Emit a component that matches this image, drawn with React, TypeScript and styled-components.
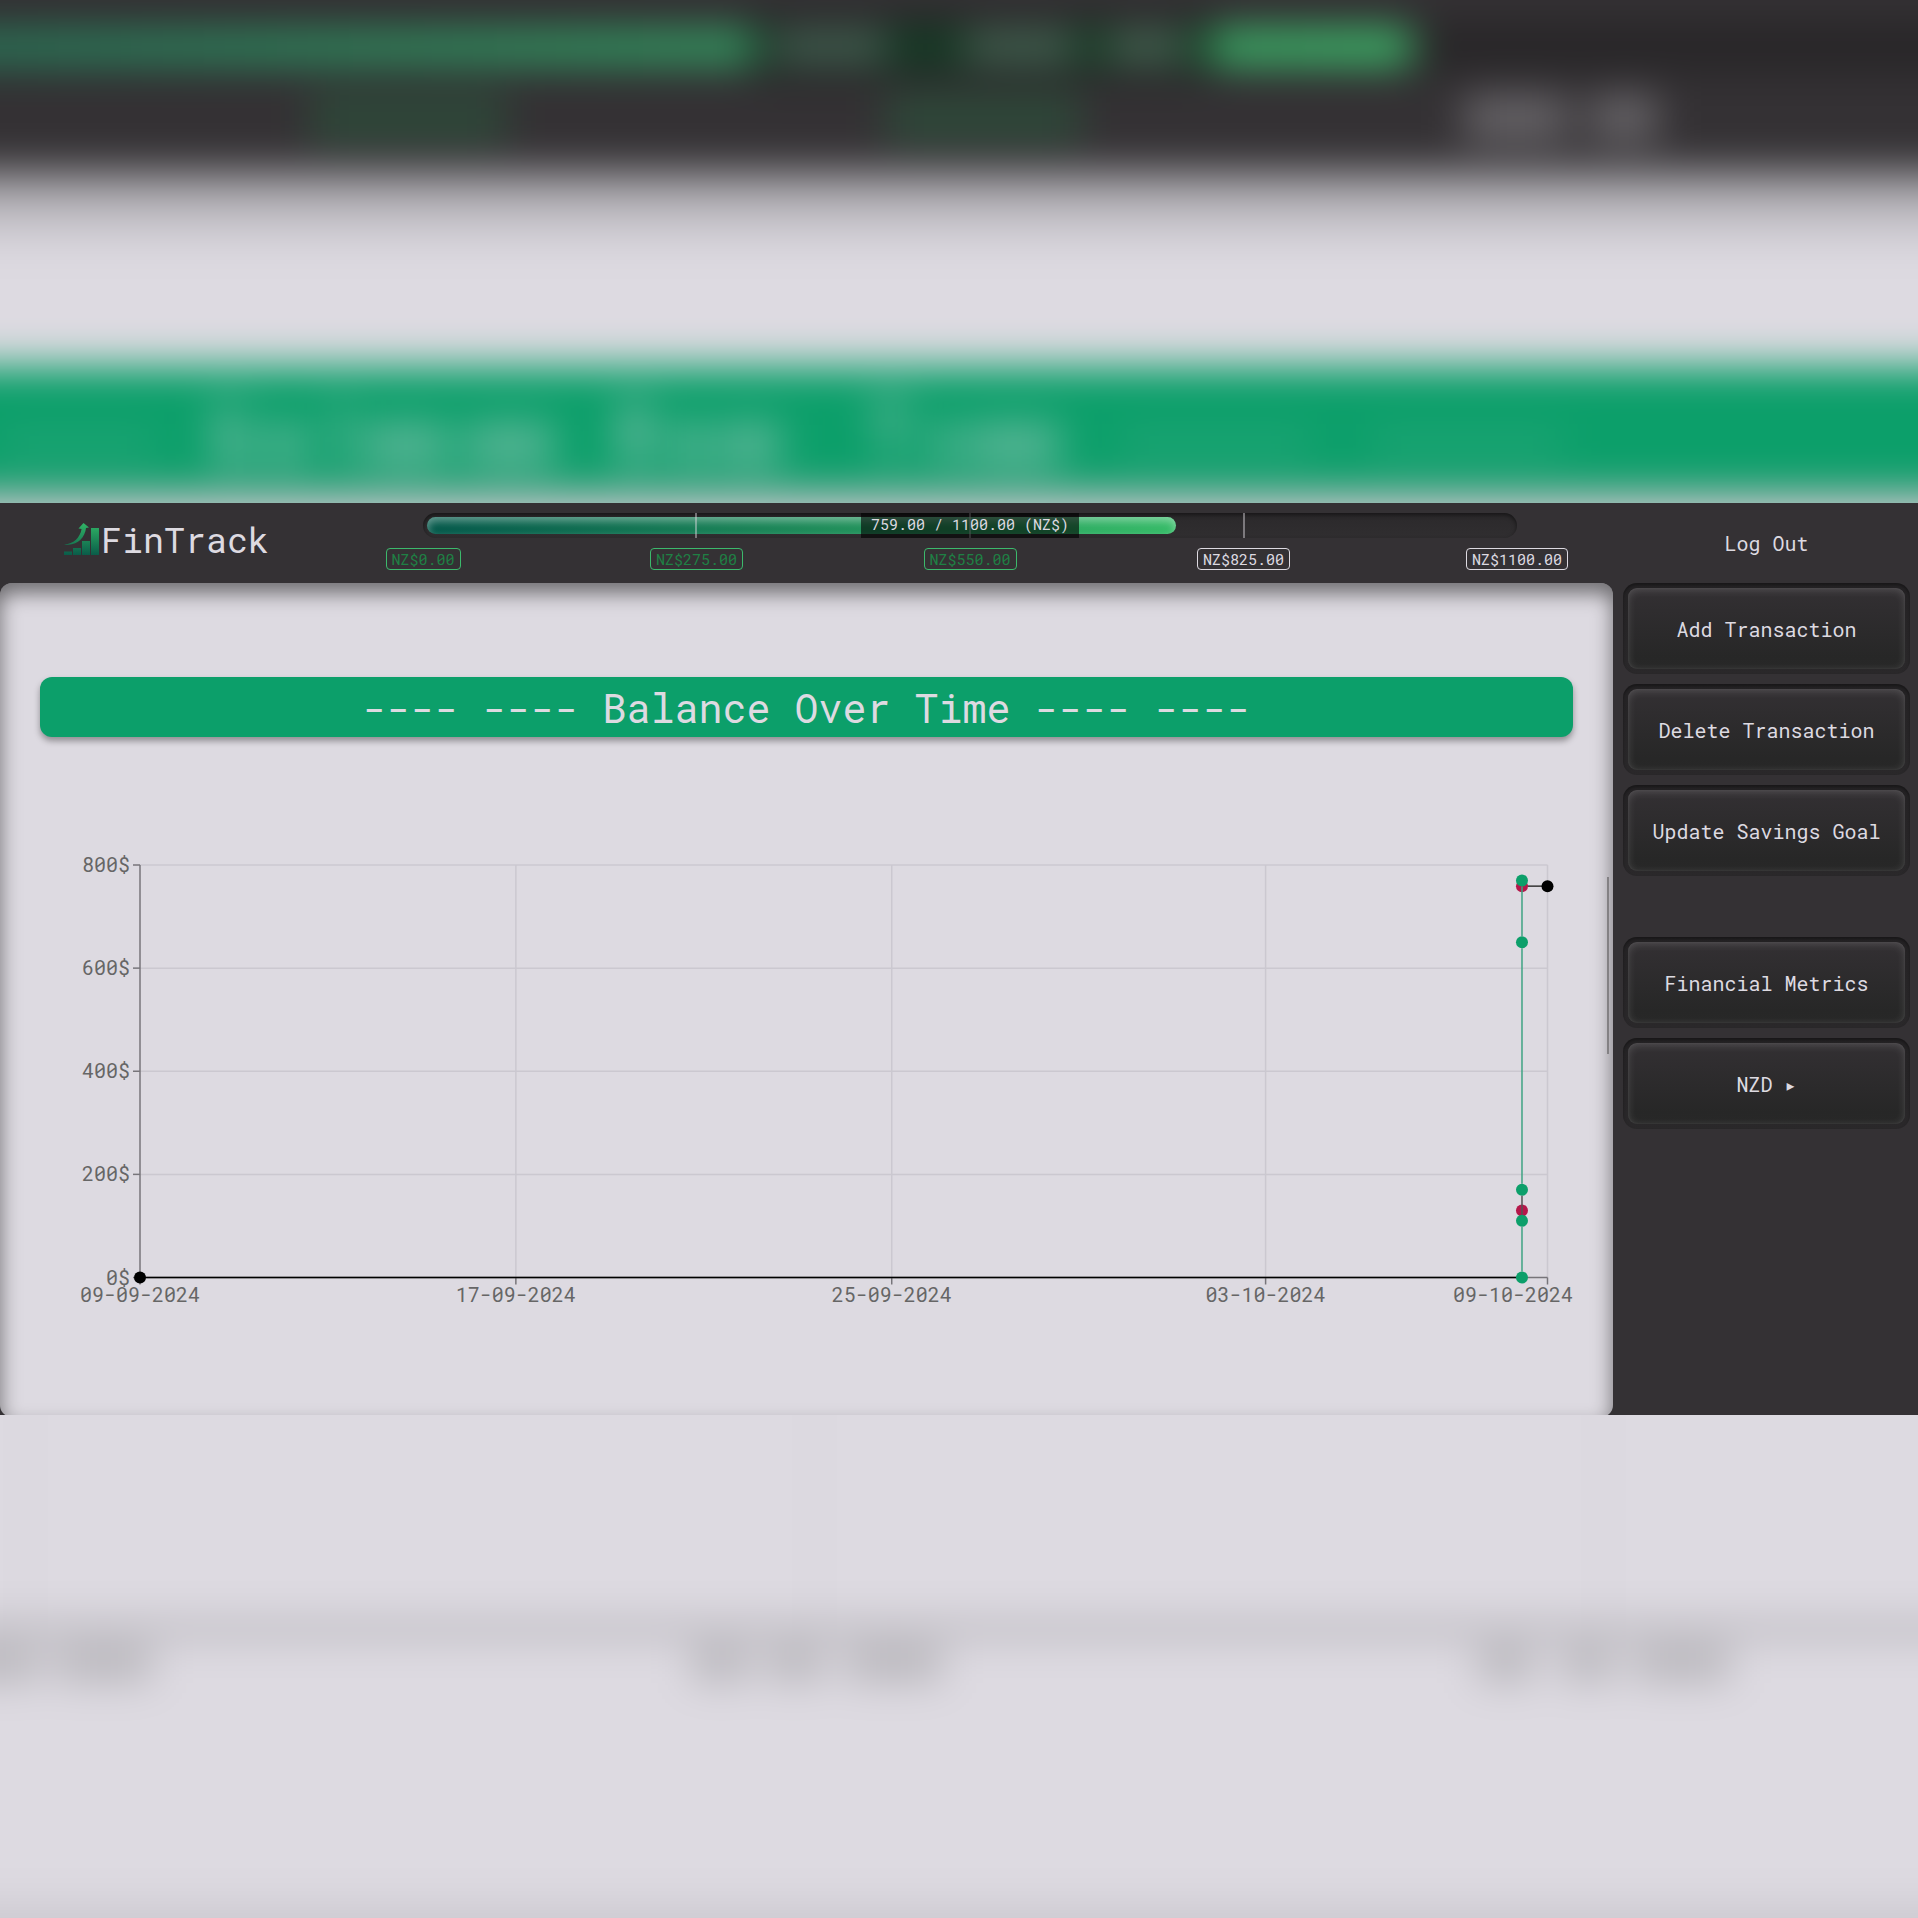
import React from "react";
import styled, { createGlobalStyle, css } from "styled-components";

const color = {
  ink: "#343134",
  paper: "#dddae1",
  brand: "#0c9f6a",
  brandText: "#1f8044",
  brandBorder: "#3cb96c",
  expense: "#b5174a",
  axis: "#666666",
};

const GlobalStyle = createGlobalStyle`
  *, *::before, *::after { box-sizing: border-box; }
  body {
    margin: 0;
    background: ${color.paper};
    color: ${color.paper};
    font-family: "Roboto Mono", "DejaVu Sans Mono", "Liberation Mono", monospace;
    font-size: 20px;
  }
  button { font: inherit; color: inherit; cursor: pointer; }
`;

const Page = styled.div`
  position: relative;
  min-height: 100vh;
  display: flex;
  flex-direction: column;
  justify-content: center;
  overflow: hidden;
`;

const BackdropArt = styled.svg`
  position: absolute;
  inset: 0;
  width: 100%;
  height: 100%;
`;

const Window = styled.div`
  position: relative;
  display: grid;
  grid-template-columns: minmax(0, 1fr) 305px;
  background: ${color.ink};
  overflow: hidden;
`;

const Main = styled.main`
  display: flex;
  flex-direction: column;
`;

const Header = styled.header`
  display: flex;
  height: 80px;
  padding: 0 96px 0 64px;
`;

const Brand = styled.a`
  display: flex;
  align-items: center;
  flex: 0 0 359px;
  gap: 2px;
  height: 72px;
  color: inherit;
  text-decoration: none;
  font-size: 35px;
  line-height: 40px;
`;

const Goal = styled.section`
  flex: 1;
  padding-top: 10px;
`;

const Track = styled.div`
  position: relative;
  height: 25px;
  padding: 4px;
  border-radius: 13px;
  background: linear-gradient(#2b292b, #302e30);
  box-shadow: inset 0 2px 4px rgba(0, 0, 0, 0.5);
`;

const Fill = styled.div`
  height: 17px;
  border-radius: 9px;
  background: linear-gradient(90deg, #04584a, #35bb67);
  box-shadow: inset 0 4px 8px rgba(255, 255, 255, 0.4);
`;

const Marks = styled.div`
  position: absolute;
  inset: 0;
  display: flex;
  justify-content: space-evenly;
`;

const Mark = styled.span`
  width: 2px;
  background: rgba(221, 218, 225, 0.45);
`;

const TrackCaption = styled.div`
  position: absolute;
  inset: 0;
  display: flex;
  justify-content: center;
`;

const CaptionText = styled.span`
  padding: 0 10px;
  background: rgba(0, 0, 0, 0.6);
  font-size: 15px;
  line-height: 23px;
  white-space: nowrap;
`;

const Scale = styled.div`
  display: flex;
  justify-content: space-between;
  padding-top: 10px;
`;

const ScaleStop = styled.div`
  display: flex;
  justify-content: center;
  width: 0;
`;

const ScaleLabel = styled.span<{ $reached: boolean }>`
  flex: none;
  padding: 0 5px;
  border: 1px solid ${(p) => (p.$reached ? color.brandBorder : color.paper)};
  border-radius: 4px;
  color: ${(p) => (p.$reached ? color.brandText : color.paper)};
  font-size: 15px;
  line-height: 20px;
`;

const Panel = styled.section`
  position: relative;
  flex: 1;
  margin-bottom: -2px;
  padding: 94px 40px 100px;
  border-radius: 12px;
  background: ${color.paper};
  box-shadow: inset 0 10px 20px rgba(0, 0, 0, 0.5);
`;

const Banner = styled.h1`
  height: 60px;
  margin: 0 0 100px;
  border-radius: 12px;
  background: ${color.brand};
  box-shadow: 0 4px 6px rgba(0, 0, 0, 0.35);
  font-size: 40px;
  font-weight: 400;
  line-height: 62px;
  text-align: center;
  white-space: pre;
`;

const ChartArt = styled.svg`
  display: block;
  width: 100%;
  height: auto;
  overflow: visible;
`;

const ScrollThumb = styled.span`
  position: absolute;
  top: 294px;
  right: 4px;
  width: 2px;
  height: 177px;
  background: #838184;
`;

const Sidebar = styled.aside`
  display: flex;
  flex-direction: column;
  padding: 0 8px 0 10px;
`;

const LogOut = styled.button`
  height: 80px;
  padding: 0;
  border: 0;
  background: none;
`;

const ButtonStack = styled.nav<{ $apart?: boolean }>`
  display: grid;
  gap: 10px;
  ${(p) =>
    p.$apart &&
    css`
      margin-top: 61px;
    `}
`;

const ButtonWell = styled.div`
  display: grid;
  height: 91px;
  padding: 5px;
  border-radius: 14px;
  background: linear-gradient(#242224, #2a282a);
  box-shadow: inset 0 2px 3px rgba(0, 0, 0, 0.35);
`;

const MenuButton = styled.button`
  padding: 0;
  border: 0;
  border-radius: 9px;
  background: linear-gradient(#333033, #272727 85%, #282828);
  box-shadow:
    inset 0 2px 8px rgba(255, 255, 255, 0.16),
    inset 0 0 3px rgba(255, 255, 255, 0.06);
`;

function Backdrop() {
  return (
    <BackdropArt viewBox="0 0 1918 1918" preserveAspectRatio="xMidYMid slice" aria-hidden="true">
      <defs>
        <filter
          id="soft"
          filterUnits="userSpaceOnUse"
          x="-100"
          y="-100"
          width="2118"
          height="2118"
          colorInterpolationFilters="sRGB"
        >
          <feGaussianBlur stdDeviation="20" />
        </filter>
        <linearGradient id="goalGlow" x1="0" x2="1">
          <stop offset="0" stopColor="#2a6f58" />
          <stop offset="1" stopColor="#40bd6e" />
        </linearGradient>
        <linearGradient id="topShade" x1="0" x2="0" y1="0" y2="1">
          <stop offset="0" stopColor="#000" stopOpacity="0.42" />
          <stop offset="0.4" stopColor="#000" stopOpacity="0.18" />
          <stop offset="1" stopColor="#000" stopOpacity="0" />
        </linearGradient>
      </defs>
      <rect width="1918" height="1918" fill={color.paper} />
      <g filter="url(#soft)">
        <rect x="-200" y="-200" width="2318" height="2318" fill={color.paper} />
        <rect x="-200" y="-200" width="2318" height="368" fill={color.ink} />
        <rect x="-200" y="168" width="2318" height="84" fill="url(#topShade)" />
        <rect x="-200" y="21" width="2318" height="52" fill="#282628" />
        <rect x="-200" y="29" width="1616" height="36" rx="18" fill="url(#goalGlow)" />
        <rect x="753" y="21" width="458" height="52" fill="#000" fillOpacity="0.6" />
        <g fill={color.paper} fillOpacity="0.32">
          <rect x="774" y="34" width="112" height="24" />
          <rect x="966" y="34" width="108" height="24" />
          <rect x="1108" y="34" width="76" height="24" />
        </g>
        <g fill="#1f8044" fillOpacity="0.32">
          <rect x="310" y="95" width="196" height="46" />
          <rect x="885" y="95" width="196" height="46" />
        </g>
        <g fill={color.paper} fillOpacity="0.3">
          <rect x="1464" y="95" width="104" height="46" />
          <rect x="1590" y="95" width="68" height="46" />
        </g>
        <rect x="-200" y="492" width="2318" height="20" fill="#b5b2b8" />
        <rect x="-200" y="366" width="2318" height="126" fill={color.brand} />
        <g fill={color.paper} fillOpacity="0.38">
          <rect x="214" y="402" width="16" height="64" />
          <rect x="230" y="402" width="22" height="8" />
          <rect x="230" y="428" width="22" height="38" />
          <rect x="268" y="424" width="36" height="42" />
          <rect x="334" y="402" width="14" height="64" />
          <rect x="364" y="424" width="84" height="42" />
          <rect x="466" y="424" width="88" height="42" />
          <rect x="618" y="402" width="34" height="64" />
          <rect x="672" y="424" width="36" height="42" />
          <rect x="720" y="424" width="60" height="42" />
          <rect x="868" y="402" width="44" height="12" />
          <rect x="884" y="402" width="14" height="64" />
          <rect x="932" y="424" width="24" height="42" />
          <rect x="968" y="424" width="92" height="42" />
        </g>
        <g fill={color.paper} fillOpacity="0.12">
          <rect x="0" y="434" width="156" height="20" />
          <rect x="1120" y="434" width="190" height="20" />
          <rect x="1372" y="434" width="190" height="20" />
        </g>
        <rect x="-200" y="1627" width="2318" height="5" fill="#3a383b" fillOpacity="0.8" />
        <g fill="#c4c1c8" fillOpacity="0.6">
          <rect x="24" y="1300" width="3" height="330" />
          <rect x="813" y="1300" width="3" height="330" />
          <rect x="1602" y="1300" width="3" height="330" />
        </g>
        <g fill="#666" fillOpacity="0.34">
          <rect x="-100" y="1649" width="140" height="31" />
          <rect x="56" y="1649" width="96" height="31" />
          <rect x="692" y="1649" width="58" height="31" />
          <rect x="768" y="1649" width="56" height="31" />
          <rect x="846" y="1649" width="96" height="31" />
          <rect x="1478" y="1649" width="56" height="31" />
          <rect x="1562" y="1649" width="52" height="31" />
          <rect x="1634" y="1649" width="96" height="31" />
        </g>
        <rect x="-200" y="1904" width="2318" height="200" fill="#ccc9d0" />
      </g>
    </BackdropArt>
  );
}

function Logo() {
  return (
    <svg width="35" height="32" viewBox="0 0 35 32" aria-hidden="true">
      <defs>
        <linearGradient id="logoInk" gradientUnits="userSpaceOnUse" x1="0" x2="0" y1="0" y2="32">
          <stop offset="0" stopColor="#31b566" />
          <stop offset="1" stopColor="#0a5c49" />
        </linearGradient>
      </defs>
      <g fill="url(#logoInk)">
        <path d="M0 28.500h8V32H0zM9 25h8v7H9zM18 18h8v14h-8zM27 5h8v27h-8z" />
        <path d="M0 21.200C9 21.500 16 15 17.600 6L14.500 5.500 19.500 0 25 4.500 22 5C21 15 12 24 0 21.200z" />
      </g>
    </svg>
  );
}

const SAVED = 759;
const TARGET = 1100;

function SavingsGoal() {
  const stops = [0, 0.25, 0.5, 0.75, 1].map((share) => share * TARGET);
  return (
    <Goal aria-label="Savings goal">
      <Track>
        <Fill style={{ width: `${(SAVED / TARGET) * 100}%` }} />
        <Marks>
          <Mark />
          <Mark />
          <Mark />
        </Marks>
        <TrackCaption>
          <CaptionText>{`${SAVED.toFixed(2)} / ${TARGET.toFixed(2)} (NZ$)`}</CaptionText>
        </TrackCaption>
      </Track>
      <Scale>
        {stops.map((value) => (
          <ScaleStop key={value}>
            <ScaleLabel $reached={value <= SAVED}>{`NZ$${value.toFixed(2)}`}</ScaleLabel>
          </ScaleStop>
        ))}
      </Scale>
    </Goal>
  );
}

/* Plot area inside the chart's 1533 x 480 drawing. */
const plot = { left: 100, right: 1507.5, top: 28, bottom: 440.5 };
/* The clocks go forward during the period, so it is one hour short of 30 days. */
const DAYS = 29.958;
const MAX = 800;
const px = (day: number) => plot.left + ((plot.right - plot.left) * day) / DAYS;
const py = (amount: number) => plot.bottom - ((plot.bottom - plot.top) * amount) / MAX;

const dateTicks = [
  { day: 0, label: "09-09-2024" },
  { day: 8, label: "17-09-2024" },
  { day: 16, label: "25-09-2024" },
  { day: 23.958, label: "03-10-2024" },
  { day: DAYS, label: "09-10-2024" },
];

const LAST = 29.415;
const dots = [
  { day: 0, amount: 0, fill: "#000" },
  { day: DAYS, amount: 759, fill: "#000" },
  { day: LAST, amount: 759, fill: color.expense },
  { day: LAST, amount: 770, fill: color.brand },
  { day: LAST, amount: 650, fill: color.brand },
  { day: LAST, amount: 130, fill: color.expense },
  { day: LAST, amount: 170, fill: color.brand },
  { day: LAST, amount: 110, fill: color.brand },
  { day: LAST, amount: 0, fill: color.brand },
];

function BalanceChart() {
  return (
    <ChartArt viewBox="0 0 1533 480" role="img" aria-label="Balance over time" fontSize="20" fill={color.axis}>
      <g stroke="#cbc8d0" strokeWidth="1.500">
        {[200, 400, 600, 800].map((v) => (
          <line key={v} x1={plot.left} x2={plot.right} y1={py(v)} y2={py(v)} />
        ))}
        {dateTicks.slice(1).map((t) => (
          <line key={t.day} x1={px(t.day)} x2={px(t.day)} y1={plot.top} y2={plot.bottom} />
        ))}
      </g>
      <g stroke="#77757a" strokeWidth="1.500">
        <line x1={plot.left} x2={plot.left} y1={plot.top} y2={plot.bottom} />
        <line x1={plot.left} x2={plot.right} y1={plot.bottom} y2={plot.bottom} />
        {[0, 200, 400, 600, 800].map((v) => (
          <line key={v} x1={plot.left - 7} x2={plot.left} y1={py(v)} y2={py(v)} />
        ))}
        {dateTicks.map((t) => (
          <line key={t.day} x1={px(t.day)} x2={px(t.day)} y1={plot.bottom} y2={plot.bottom + 7} />
        ))}
      </g>
      {[0, 200, 400, 600, 800].map((v) => (
        <text key={v} x={plot.left - 10} y={py(v) + 7} textAnchor="end">
          {`${v}$`}
        </text>
      ))}
      {dateTicks.map((t) => {
        const atEnd = t.day === DAYS;
        return (
          <text key={t.day} x={atEnd ? 1533 : px(t.day)} y={465} textAnchor={atEnd ? "end" : "middle"}>
            {t.label}
          </text>
        );
      })}
      <g strokeWidth="1.500">
        <line x1={px(0)} x2={px(LAST)} y1={py(0)} y2={py(0)} stroke="#000" />
        <line x1={px(LAST)} x2={px(DAYS)} y1={py(759)} y2={py(759)} stroke="#333" />
      </g>
      {dots.map((d, i) => (
        <circle key={i} cx={px(d.day)} cy={py(d.amount)} r="6" fill={d.fill} />
      ))}
      <g strokeWidth="1.500">
        <line x1={px(LAST)} x2={px(LAST)} y1={py(0) - 6} y2={py(110) + 6} stroke="#3fa383" />
        <line x1={px(LAST)} x2={px(LAST)} y1={py(110) - 6} y2={py(170) + 6} stroke="#555" />
        <line x1={px(LAST)} x2={px(LAST)} y1={py(170) - 6} y2={py(650) + 6} stroke="#3fa383" />
        <line x1={px(LAST)} x2={px(LAST)} y1={py(650) - 6} y2={py(770) + 6} stroke="#3fa383" />
      </g>
    </ChartArt>
  );
}

function SideButton({ children }: { children: React.ReactNode }) {
  return (
    <ButtonWell>
      <MenuButton type="button">{children}</MenuButton>
    </ButtonWell>
  );
}

export default function App() {
  return (
    <>
      <GlobalStyle />
      <Page>
        <Backdrop />
        <Window>
          <Main>
            <Header>
              <Brand href="#">
                <Logo />
                <span>FinTrack</span>
              </Brand>
              <SavingsGoal />
            </Header>
            <Panel>
              <Banner>---- ---- Balance Over Time ---- ----</Banner>
              <BalanceChart />
              <ScrollThumb />
            </Panel>
          </Main>
          <Sidebar>
            <LogOut type="button">Log Out</LogOut>
            <ButtonStack aria-label="Transactions">
              <SideButton>Add Transaction</SideButton>
              <SideButton>Delete Transaction</SideButton>
              <SideButton>Update Savings Goal</SideButton>
            </ButtonStack>
            <ButtonStack $apart aria-label="Reports">
              <SideButton>Financial Metrics</SideButton>
              <SideButton>NZD ▸</SideButton>
            </ButtonStack>
          </Sidebar>
        </Window>
      </Page>
    </>
  );
}
